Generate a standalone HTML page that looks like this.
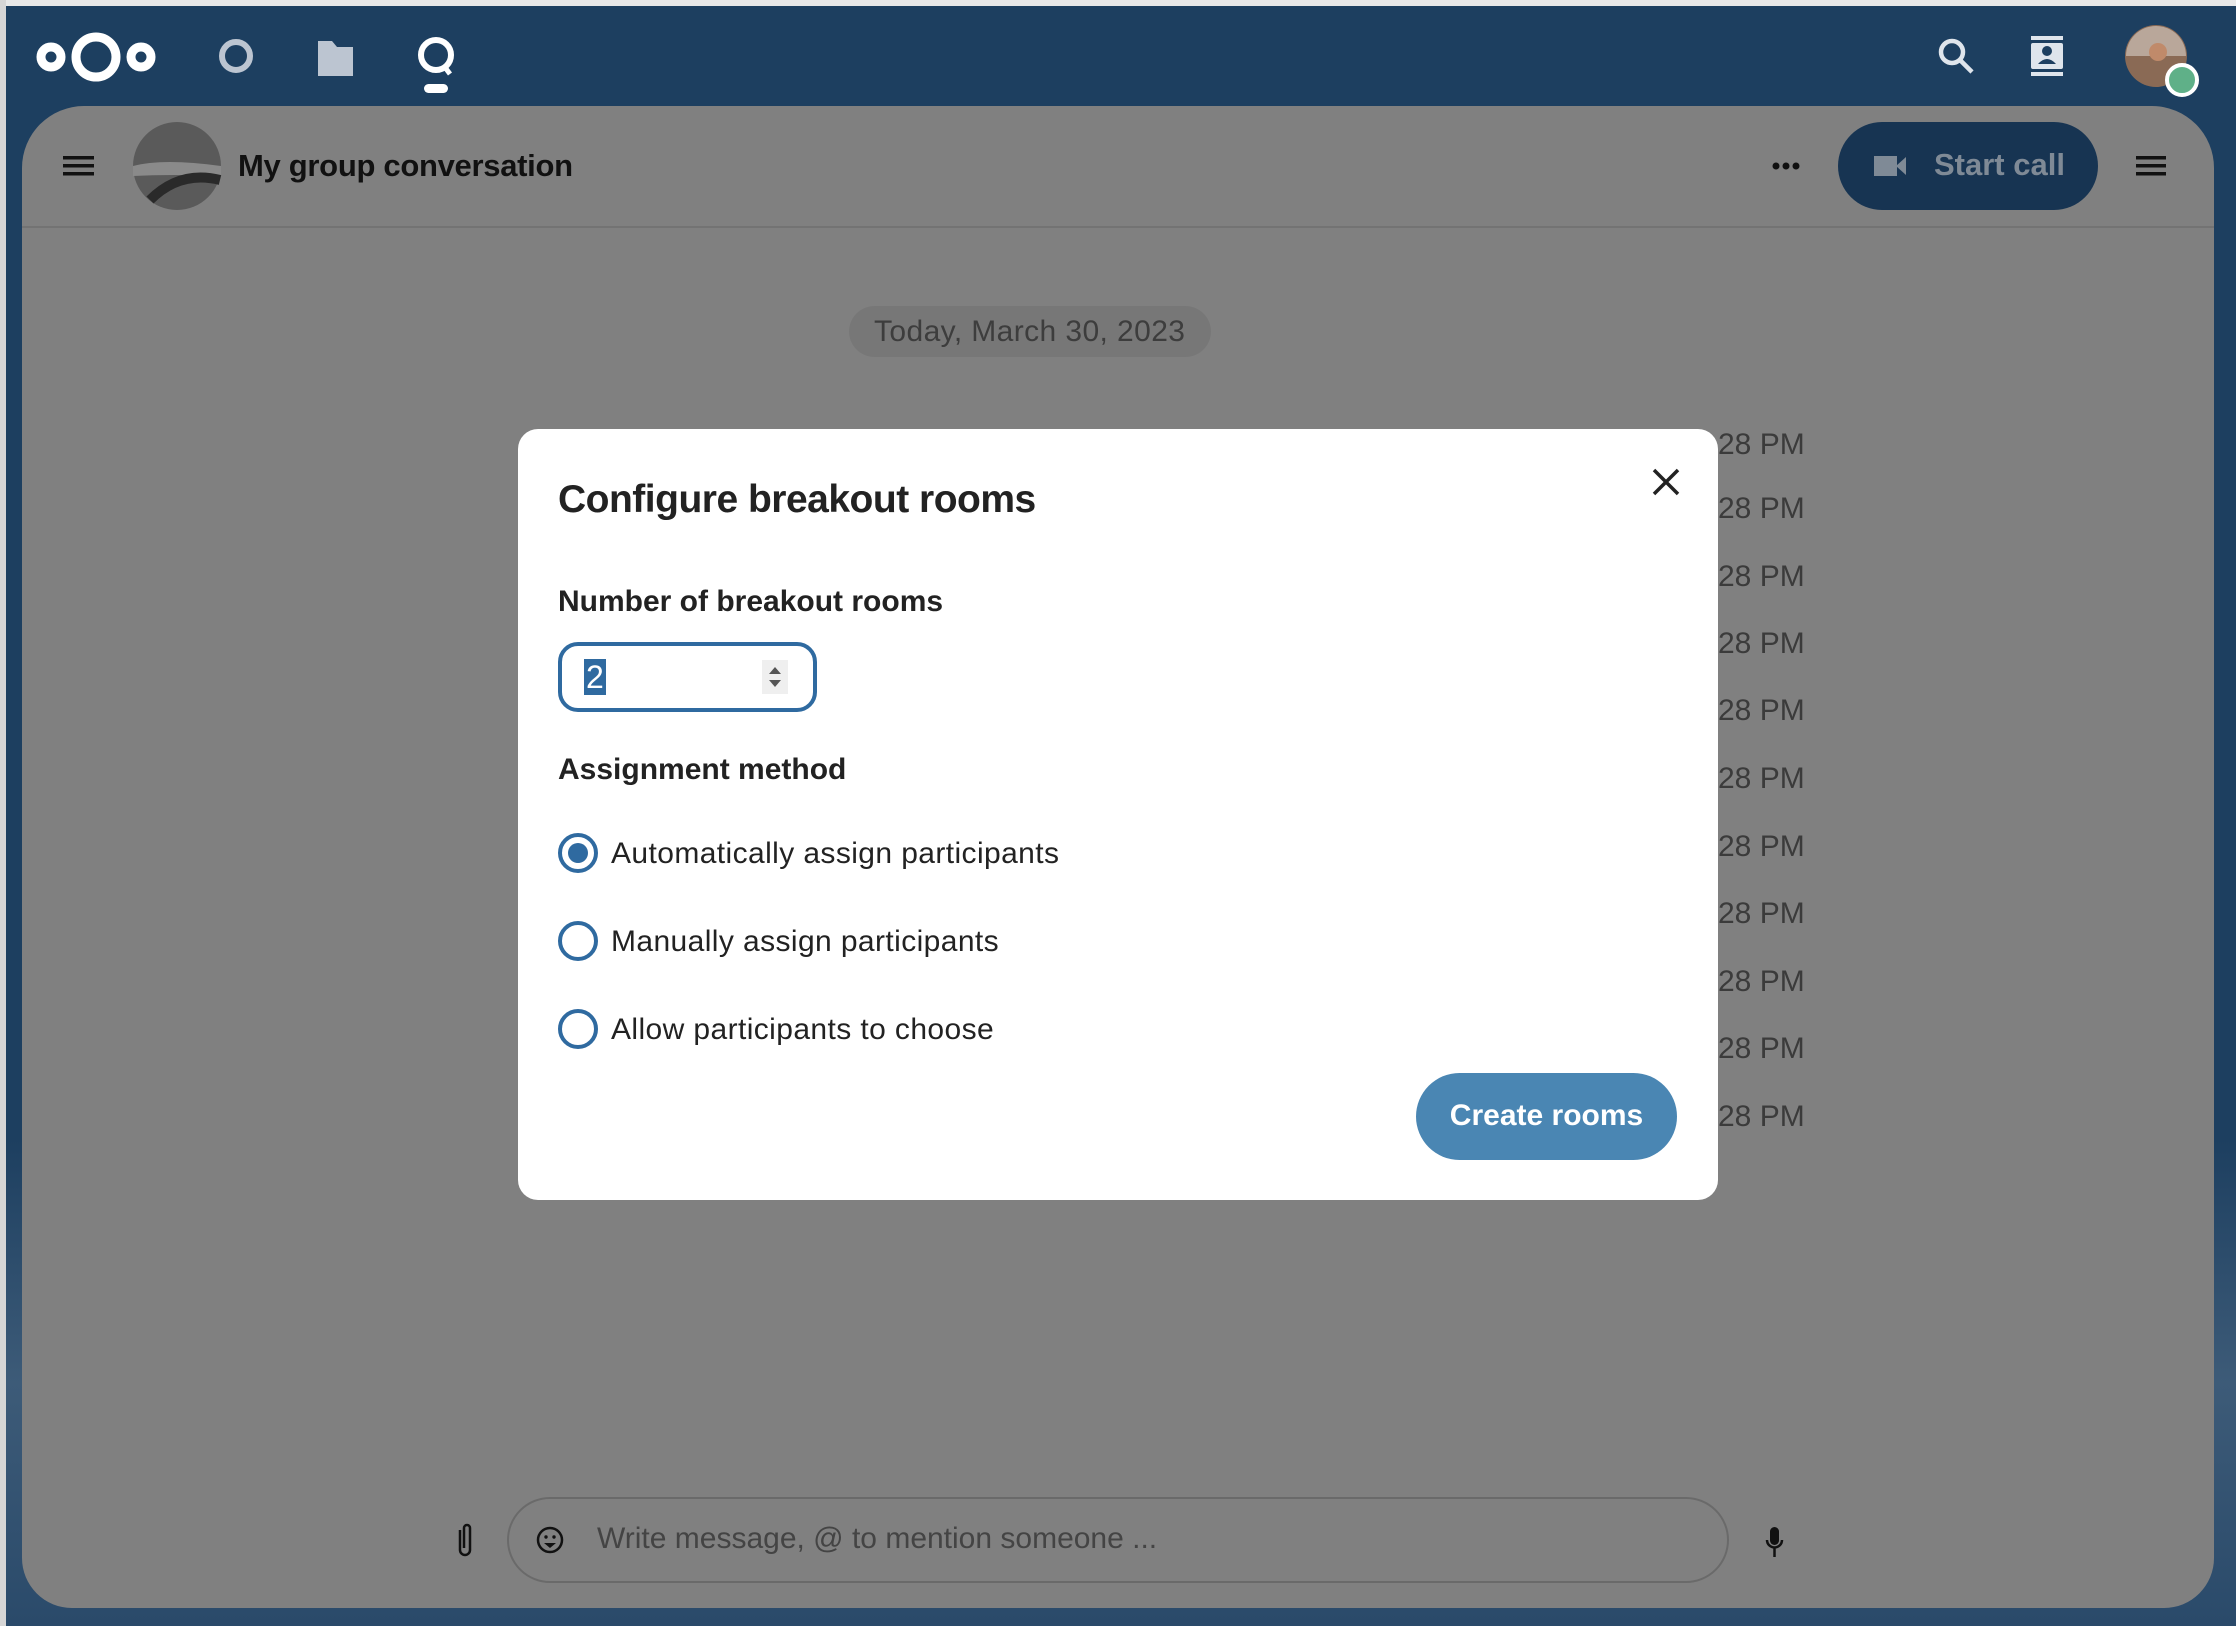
<!DOCTYPE html>
<html><head><meta charset="utf-8"><style>
*{margin:0;padding:0;box-sizing:border-box}
body{width:2236px;height:1626px;overflow:hidden;background:#e8e8e8;font-family:"Liberation Sans",sans-serif;position:relative}
.abs{position:absolute}
#top{left:6px;top:6px;width:2230px;height:1620px;background:linear-gradient(#1d3f60 0,#1d3f60 70%,#3d5b78 85%,#2a4a6a 100%);}
#win{left:22px;top:106px;width:2192px;height:1502px;background:#808080;border-radius:62px 62px 50px 50px;overflow:hidden}
.t{position:absolute;white-space:nowrap}
.pm{left:1718px;font-size:30px;color:#3b3b3b}
</style></head><body>
<div class="abs" style="left:0;top:0;width:6px;height:1626px;background:#d6d6d6"></div>
<div id="top" class="abs"></div>
<svg class="abs" style="left:0;top:0" width="2236" height="106">
 <g fill="none" stroke="#fff" stroke-width="9">
  <circle cx="51" cy="57" r="10"/><circle cx="96" cy="57" r="20"/><circle cx="141" cy="57" r="10"/>
 </g>
 <circle cx="236" cy="56" r="14" fill="none" stroke="#bcc5d1" stroke-width="6"/>
 <path d="M318 41h14l5 6h16v29h-35z" fill="#bcc5d1"/>
 <circle cx="436" cy="55" r="15" fill="none" stroke="#fff" stroke-width="6"/>
 <path d="M444 66l6 8" stroke="#fff" stroke-width="5"/>
 <rect x="424" y="84" width="24" height="9" rx="4.5" fill="#fff"/>
 <circle cx="1952" cy="52" r="11" fill="none" stroke="#dfe5ec" stroke-width="4.5"/>
 <path d="M1960 60l12 12" stroke="#dfe5ec" stroke-width="4.5"/>
 <rect x="2031" y="36" width="32" height="4" fill="#dfe5ec"/>
 <rect x="2031" y="72" width="32" height="4" fill="#dfe5ec"/>
 <rect x="2031" y="43" width="32" height="26" rx="2" fill="#dfe5ec"/>
 <circle cx="2047" cy="51" r="5" fill="#1d3f60"/>
 <path d="M2038 64q9-10 18 0z" fill="#1d3f60"/>
 <circle cx="2156" cy="56" r="31" fill="#8a6a55"/>
 <path d="M2126 56a30 30 0 0 1 60 0z" fill="#b9a79a"/>
 <circle cx="2158" cy="52" r="9" fill="#c08a6a"/>
 <circle cx="2182" cy="80" r="15" fill="#5fb088" stroke="#fff" stroke-width="4"/>
</svg>
<div id="win" class="abs">
 <div class="abs" style="left:0;top:120px;width:2192px;height:2px;background:#737373"></div>
</div>
<svg class="abs" style="left:0;top:100px" width="2236" height="130">
 <g fill="#111"><rect x="63" y="56" width="31" height="3.5"/><rect x="63" y="64" width="31" height="3.5"/><rect x="63" y="72" width="31" height="3.5"/></g>
 <circle cx="177" cy="66" r="44" fill="#5a5a5a"/>
 <path d="M133 66q30-8 88 0v10q-50-2-88 0z" fill="#8a8a8a"/>
 <path d="M150 100q30-30 70-20" stroke="#2a2a2a" stroke-width="10" fill="none"/>
 <g fill="#111"><circle cx="1776" cy="66" r="3.5"/><circle cx="1786" cy="66" r="3.5"/><circle cx="1796" cy="66" r="3.5"/></g>
 <rect x="1838" y="22" width="260" height="88" rx="44" fill="#173452"/>
 <rect x="1874" y="56" width="23" height="20" fill="#7f8a96"/><path d="M1896 66l10-9v18z" fill="#7f8a96"/>
 <g fill="#111"><rect x="2136" y="56" width="30" height="3.5"/><rect x="2136" y="64" width="30" height="3.5"/><rect x="2136" y="72" width="30" height="3.5"/></g>
</svg>
<div class="t" style="left:238px;top:148px;font-size:31px;font-weight:bold;color:#111;letter-spacing:-0.3px">My group conversation</div>
<div class="t" style="left:1934px;top:147px;font-size:31px;font-weight:bold;color:#7f8a96">Start call</div>
<div class="abs" style="left:849px;top:306px;width:362px;height:51px;border-radius:26px;background:#777"></div>
<div class="t" style="left:874px;top:315px;font-size:30px;color:#3d3d3d;letter-spacing:0.4px">Today, March 30, 2023</div>
<div class="t pm" style="top:428px">28 PM</div>
<div class="t pm" style="top:492px">28 PM</div>
<div class="t pm" style="top:560px">28 PM</div>
<div class="t pm" style="top:627px">28 PM</div>
<div class="t pm" style="top:694px">28 PM</div>
<div class="t pm" style="top:762px">28 PM</div>
<div class="t pm" style="top:830px">28 PM</div>
<div class="t pm" style="top:897px">28 PM</div>
<div class="t pm" style="top:965px">28 PM</div>
<div class="t pm" style="top:1032px">28 PM</div>
<div class="t pm" style="top:1100px">28 PM</div>
<div class="abs" style="left:507px;top:1497px;width:1222px;height:86px;border-radius:43px;border:2px solid #6a6a6a"></div>
<div class="t" style="left:597px;top:1522px;font-size:30px;color:#444">Write message, @ to mention someone ...</div>
<svg class="abs" style="left:440px;top:1510px" width="1360" height="60">
 <path d="M20 20v20a5 5 0 0 0 10 0v-22a3 3 0 0 0-6 0v20" fill="none" stroke="#111" stroke-width="2.5"/>
 <circle cx="110" cy="30" r="12" fill="none" stroke="#111" stroke-width="2.5"/>
 <circle cx="106" cy="27" r="1.7" fill="#111"/><circle cx="114" cy="27" r="1.7" fill="#111"/>
 <path d="M104 33h12l-6 5z" fill="#111"/>
 <rect x="1330" y="17" width="9" height="18" rx="4.5" fill="#111"/>
 <path d="M1327 30a7.5 7.5 0 0 0 15 0M1334.5 38v9" fill="none" stroke="#111" stroke-width="2.5"/>
</svg>
<div class="abs" style="left:518px;top:429px;width:1200px;height:771px;background:#fff;border-radius:20px"></div>
<svg class="abs" style="left:1650px;top:466px" width="32" height="32"><path d="M4 4l24 24M28 4L4 28" stroke="#222" stroke-width="3.5"/></svg>
<div class="t" style="left:558px;top:478px;font-size:39px;font-weight:bold;color:#222;letter-spacing:-0.5px">Configure breakout rooms</div>
<div class="t" style="left:558px;top:585px;font-size:30px;font-weight:bold;color:#222">Number of breakout rooms</div>
<div class="abs" style="left:558px;top:642px;width:259px;height:70px;border:4px solid #2f6aa0;border-radius:20px"></div>
<div class="t" style="left:584px;top:659px;font-size:32px;color:#fff;background:#2f6aa0;line-height:36px;padding:0 2px">2</div>
<div class="abs" style="left:762px;top:660px;width:26px;height:34px;background:#efefef"></div>
<svg class="abs" style="left:762px;top:660px" width="26" height="34"><path d="M7 14l6-7 6 7zM7 20l6 7 6-7z" fill="#555"/></svg>
<div class="t" style="left:558px;top:753px;font-size:30px;font-weight:bold;color:#222">Assignment method</div>
<svg class="abs" style="left:555px;top:830px" width="50" height="230">
 <circle cx="23" cy="23" r="18" fill="none" stroke="#2f6aa0" stroke-width="4"/><circle cx="23" cy="23" r="10" fill="#2f6aa0"/>
 <circle cx="23" cy="111" r="18" fill="none" stroke="#2f6aa0" stroke-width="4"/>
 <circle cx="23" cy="199" r="18" fill="none" stroke="#2f6aa0" stroke-width="4"/>
</svg>
<div class="t" style="left:611px;top:837px;font-size:30px;color:#222;letter-spacing:0.4px">Automatically assign participants</div>
<div class="t" style="left:611px;top:925px;font-size:30px;color:#222;letter-spacing:0.4px">Manually assign participants</div>
<div class="t" style="left:611px;top:1013px;font-size:30px;color:#222;letter-spacing:0.4px">Allow participants to choose</div>
<div class="abs" style="left:1416px;top:1073px;width:261px;height:87px;border-radius:44px;background:#4a86b3"></div>
<div class="t" style="left:1416px;top:1099px;width:261px;text-align:center;font-size:30px;font-weight:bold;color:#fff">Create rooms</div>
</body></html>
